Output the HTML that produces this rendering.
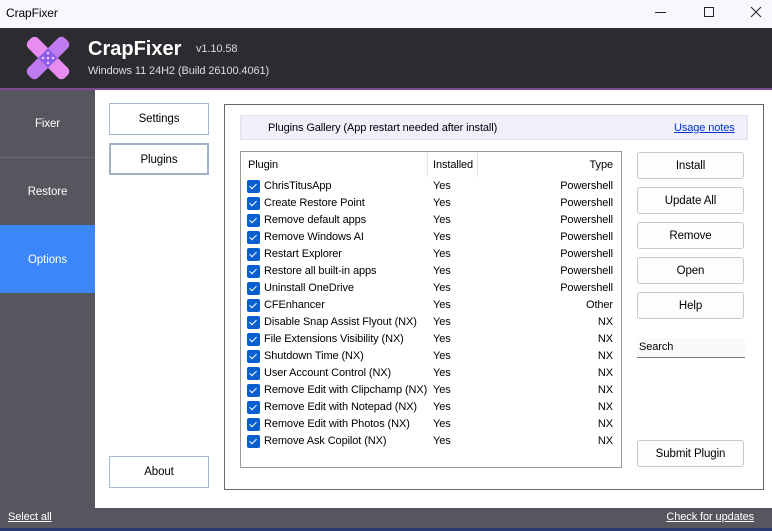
<!DOCTYPE html>
<html><head><style>
*{margin:0;padding:0;box-sizing:border-box}
body{width:772px;height:531px;overflow:hidden;font-family:"Liberation Sans",sans-serif;font-size:11px;letter-spacing:-0.1px;color:#000;background:#fff;position:relative}
.a{position:absolute}
.btn{position:absolute;border:1px solid #c8c8c8;border-radius:3px;background:#fdfdfd;text-align:center;font-size:11.5px}
.sb{position:absolute;left:109px;width:100px;border:1px solid #a7b8cc;background:#fff;text-align:center;font-size:11.5px}
.row{position:absolute;left:0;height:17px;width:380px;font-size:11px}
.cb{position:absolute;left:6px;top:2px;width:13px;height:13px;background:#0a5fd0;border-radius:2px}
.cb:after{content:"";position:absolute;left:4px;top:2px;width:3px;height:6px;border:solid #fff;border-width:0 1.3px 1.3px 0;transform:rotate(45deg)}
.row .n{position:absolute;left:23px;top:2px}
.row .i{position:absolute;left:192px;top:2px}
.row .t{position:absolute;right:8px;top:2px}
</style></head><body>
<div class="a" style="left:0;top:0;width:772px;height:28px;background:#f7f7fc"></div>
<div class="a" style="left:6px;top:6px;font-size:12px">CrapFixer</div>
<div class="a" style="left:655px;top:12px;width:11px;height:1px;background:#222"></div>
<div class="a" style="left:704px;top:7px;width:10px;height:10px;border:1px solid #222"></div>
<svg class="a" style="left:750px;top:6px" width="12" height="12"><path d="M1 1L11 11M11 1L1 11" stroke="#222" stroke-width="1"/></svg>
<div class="a" style="left:0;top:28px;width:772px;height:60px;background:#2c2c30"></div>
<div class="a" style="left:0;top:88px;width:772px;height:2px;background:#7d4a8e"></div>
<svg class="a" style="left:26px;top:36px" width="44" height="44" viewBox="0 0 44 44">
<rect x="15" y="-4" width="14" height="52" rx="5" fill="#c17bf0" transform="rotate(45 22 22)"/>
<rect x="15" y="-4" width="14" height="52" rx="5" fill="#e98cf0" transform="rotate(-45 22 22)"/>
<rect x="15" y="15" width="14" height="14" fill="#8a5de8" transform="rotate(45 22 22)"/>
<circle cx="22" cy="17" r="1.3" fill="#f3c6ff"/><circle cx="22" cy="27" r="1.3" fill="#f3c6ff"/><circle cx="17" cy="22" r="1.3" fill="#f3c6ff"/><circle cx="27" cy="22" r="1.3" fill="#f3c6ff"/><circle cx="22" cy="22" r="1.3" fill="#f3c6ff"/>
</svg>
<div class="a" style="left:88px;top:38px;font-size:20px;font-weight:bold;color:#fff;letter-spacing:0">CrapFixer</div>
<div class="a" style="left:196px;top:43px;font-size:11px;color:#ddd">v1.10.58</div>
<div class="a" style="left:88px;top:65px;font-size:11px;color:#ddd;letter-spacing:-0.1px">Windows 11 24H2 (Build 26100.4061)</div>
<div class="a" style="left:0;top:90px;width:95px;height:418px;background:#56575e"></div>
<div class="a" style="left:0;top:157px;width:95px;height:1px;background:#6a6b72"></div>
<div class="a" style="left:0;top:118px;width:95px;text-align:center;color:#fff;font-size:11.5px">Fixer</div>
<div class="a" style="left:0;top:186px;width:95px;text-align:center;color:#fff;font-size:11.5px">Restore</div>
<div class="a" style="left:0;top:225px;width:95px;height:68px;background:#3b86fb"></div>
<div class="a" style="left:0;top:254px;width:95px;text-align:center;color:#fff;font-size:11.5px">Options</div>
<div class="a" style="left:0;top:508px;width:772px;height:20px;background:#56575e"></div>
<div class="a" style="left:0;top:528px;width:772px;height:3px;background:#2a3a70"></div>
<div class="a" style="left:8px;top:511px;color:#fff;text-decoration:underline">Select all</div>
<div class="a" style="right:18px;top:511px;color:#fff;text-decoration:underline">Check for updates</div>
<div class="sb" style="top:103px;height:32px;line-height:31px">Settings</div>
<div class="sb" style="top:143px;height:32px;line-height:30px;border:2px solid #9fb2c8">Plugins</div>
<div class="sb" style="top:456px;height:32px;line-height:31px">About</div>
<div class="a" style="left:224px;top:104px;width:540px;height:386px;border:1px solid #666"></div>
<div class="a" style="left:240px;top:115px;width:508px;height:25px;background:#f0f0fa;border:1px solid #e2e2ee"></div>
<div class="a" style="left:268px;top:122px">Plugins Gallery (App restart needed after install)</div>
<div class="a" style="left:674px;top:122px;color:#0033cc;text-decoration:underline">Usage notes</div>
<div class="a" style="left:240px;top:151px;width:382px;height:317px;border:1px solid #999;background:#fff;overflow:hidden">
<div class="a" style="left:7px;top:7px">Plugin</div>
<div class="a" style="left:186px;top:0;width:1px;height:25px;background:#e5e5e5"></div>
<div class="a" style="left:192px;top:7px">Installed</div>
<div class="a" style="left:236px;top:0;width:1px;height:25px;background:#e5e5e5"></div>
<div class="a" style="right:8px;top:7px">Type</div>
<div class="a" style="left:0;top:26px;width:380px">
<div class="row" style="top:0"><div class="cb"></div><span class="n">ChrisTitusApp</span><span class="i">Yes</span><span class="t">Powershell</span></div>
<div class="row" style="top:17px"><div class="cb"></div><span class="n">Create Restore Point</span><span class="i">Yes</span><span class="t">Powershell</span></div>
<div class="row" style="top:34px"><div class="cb"></div><span class="n">Remove default apps</span><span class="i">Yes</span><span class="t">Powershell</span></div>
<div class="row" style="top:51px"><div class="cb"></div><span class="n">Remove Windows AI</span><span class="i">Yes</span><span class="t">Powershell</span></div>
<div class="row" style="top:68px"><div class="cb"></div><span class="n">Restart Explorer</span><span class="i">Yes</span><span class="t">Powershell</span></div>
<div class="row" style="top:85px"><div class="cb"></div><span class="n">Restore all built-in apps</span><span class="i">Yes</span><span class="t">Powershell</span></div>
<div class="row" style="top:102px"><div class="cb"></div><span class="n">Uninstall OneDrive</span><span class="i">Yes</span><span class="t">Powershell</span></div>
<div class="row" style="top:119px"><div class="cb"></div><span class="n">CFEnhancer</span><span class="i">Yes</span><span class="t">Other</span></div>
<div class="row" style="top:136px"><div class="cb"></div><span class="n">Disable Snap Assist Flyout (NX)</span><span class="i">Yes</span><span class="t">NX</span></div>
<div class="row" style="top:153px"><div class="cb"></div><span class="n">File Extensions Visibility (NX)</span><span class="i">Yes</span><span class="t">NX</span></div>
<div class="row" style="top:170px"><div class="cb"></div><span class="n">Shutdown Time (NX)</span><span class="i">Yes</span><span class="t">NX</span></div>
<div class="row" style="top:187px"><div class="cb"></div><span class="n">User Account Control (NX)</span><span class="i">Yes</span><span class="t">NX</span></div>
<div class="row" style="top:204px"><div class="cb"></div><span class="n">Remove Edit with Clipchamp (NX)</span><span class="i">Yes</span><span class="t">NX</span></div>
<div class="row" style="top:221px"><div class="cb"></div><span class="n">Remove Edit with Notepad (NX)</span><span class="i">Yes</span><span class="t">NX</span></div>
<div class="row" style="top:238px"><div class="cb"></div><span class="n">Remove Edit with Photos (NX)</span><span class="i">Yes</span><span class="t">NX</span></div>
<div class="row" style="top:255px"><div class="cb"></div><span class="n">Remove Ask Copilot (NX)</span><span class="i">Yes</span><span class="t">NX</span></div>
</div></div>
<div class="btn" style="left:637px;top:152px;width:107px;height:27px;line-height:26px">Install</div>
<div class="btn" style="left:637px;top:187px;width:107px;height:27px;line-height:26px">Update All</div>
<div class="btn" style="left:637px;top:222px;width:107px;height:27px;line-height:26px">Remove</div>
<div class="btn" style="left:637px;top:257px;width:107px;height:27px;line-height:26px">Open</div>
<div class="btn" style="left:637px;top:292px;width:107px;height:27px;line-height:26px">Help</div>
<div class="a" style="left:637px;top:338px;width:108px;height:20px;background:#fafafa;border-bottom:1px solid #777;padding:3px 2px">Search</div>
<div class="btn" style="left:637px;top:440px;width:107px;height:27px;line-height:26px">Submit Plugin</div>
</body></html>
